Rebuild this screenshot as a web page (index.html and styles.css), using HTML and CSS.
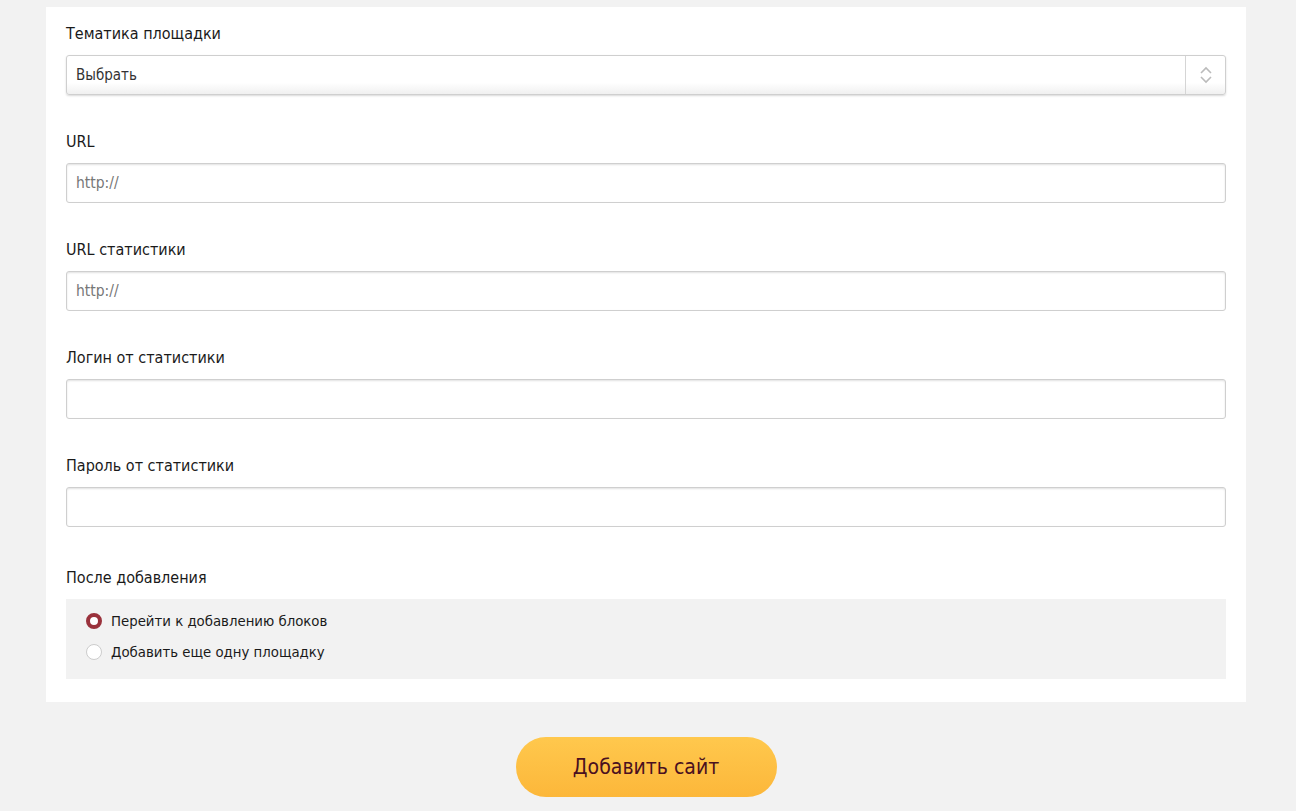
FILE: index.html
```html
<!DOCTYPE html>
<html lang="ru">
<head>
    <meta charset="UTF-8">
    <meta name="viewport" content="width=device-width, initial-scale=1.0">
    <title>Добавление площадки</title>
    <link rel="stylesheet" href="styles.css">
</head>
<body>
    <form class="site-form">
        <div class="panel">
            <div class="field">
                <label for="theme">Тематика площадки</label>
                <div class="select">
                    <span class="select-value">Выбрать</span>
                    <span class="select-arrow">
                        <svg width="14" height="20" viewBox="0 0 14 20">
                            <path d="M2 8 L7 3 L12 8" fill="none" stroke="#bbb" stroke-width="1.6"/>
                            <path d="M2 12 L7 17 L12 12" fill="none" stroke="#bbb" stroke-width="1.6"/>
                        </svg>
                    </span>
                </div>
            </div>

            <div class="field">
                <label for="url">URL</label>
                <input type="text" id="url" placeholder="http://">
            </div>

            <div class="field">
                <label for="stat_url">URL статистики</label>
                <input type="text" id="stat_url" placeholder="http://">
            </div>

            <div class="field">
                <label for="stat_login">Логин от статистики</label>
                <input type="text" id="stat_login">
            </div>

            <div class="field">
                <label for="stat_pass">Пароль от статистики</label>
                <input type="text" id="stat_pass">
            </div>

            <div class="field field-after">
                <label>После добавления</label>
                <div class="radio-box">
                    <label class="radio">
                        <input type="radio" name="after" checked>
                        <span class="radio-mark"></span>
                        Перейти к добавлению блоков
                    </label>
                    <label class="radio">
                        <input type="radio" name="after">
                        <span class="radio-mark"></span>
                        Добавить еще одну площадку
                    </label>
                </div>
            </div>
        </div>

        <div class="actions">
            <button type="button" class="btn-submit">Добавить сайт</button>
        </div>
    </form>
</body>
</html>
```

FILE: styles.css
```css
body {
    margin: 0;
    padding: 7px 0 0;
    background-color: #f2f2f2;
    font-family: "DejaVu Sans Condensed", "Liberation Sans Narrow", sans-serif;
    color: #1a1a1a;
}

.site-form {
    width: 1200px;
    margin-left: 46px;
}

.panel {
    background-color: #fff;
    padding: 17px 20px 23px;
}

.field {
    margin-bottom: 37px;
}

.field:last-child {
    margin-bottom: 0;
}

.field-after {
    padding-top: 4px;
}

.field > label {
    display: block;
    font-size: 16px;
    line-height: 20px;
    margin-bottom: 11px;
}

.field input[type="text"],
.select {
    display: block;
    width: 100%;
    height: 40px;
    box-sizing: border-box;
    border: 1px solid #cfcfcf;
    border-radius: 3px;
    padding: 0 9px;
    font-family: inherit;
    font-size: 15.5px;
    color: #333;
    box-shadow: inset 0 1px 2px rgba(0, 0, 0, 0.12);
    outline: none;
}

.field input::placeholder {
    color: #777;
}

.select {
    display: flex;
    align-items: center;
    padding: 0;
    font-size: 15px;
    box-shadow: 0 1px 2px rgba(0, 0, 0, 0.15);
    background: linear-gradient(#fff 70%, #f0f0f0);
}

.select-value {
    flex: 1;
    padding-left: 9px;
}

.select-arrow {
    width: 39px;
    height: 100%;
    border-left: 1px solid #d5d5d5;
    display: flex;
    align-items: center;
    justify-content: center;
}

.radio-box {
    background-color: #f2f2f2;
    padding: 6px 20px 12px;
}

.radio {
    display: flex;
    align-items: center;
    font-size: 14.8px;
    line-height: 21px;
    padding: 5px 0;
    color: #1a1a1a;
}

.radio input {
    display: none;
}

.radio-mark {
    width: 16px;
    height: 16px;
    box-sizing: border-box;
    border-radius: 50%;
    background: #fff;
    border: 1px solid #ccc;
    margin-right: 9px;
}

.radio input:checked + .radio-mark {
    border: 4px solid #9a323c;
}

.actions {
    display: flex;
    justify-content: center;
    padding-top: 35px;
}

.btn-submit {
    width: 261px;
    height: 60px;
    border: none;
    border-radius: 30px;
    background: linear-gradient(#ffc84d, #fcb73a);
    color: #4a1020;
    font-family: inherit;
    font-size: 21px;
    cursor: pointer;
}
```
